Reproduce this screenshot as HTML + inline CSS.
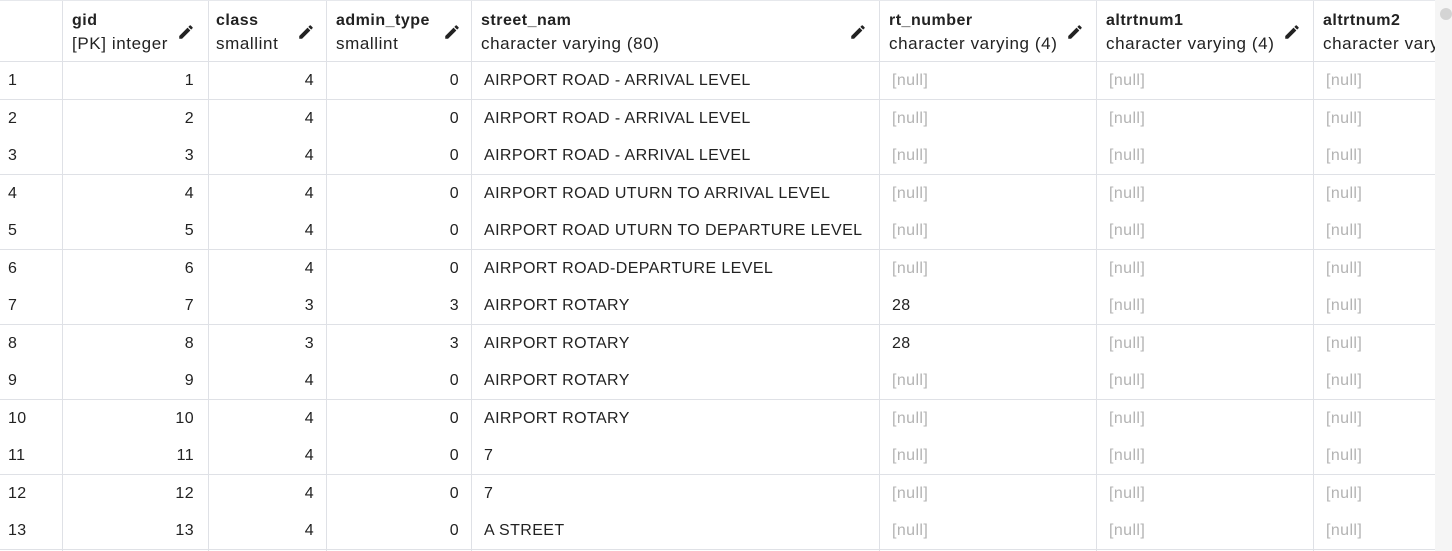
<!DOCTYPE html>
<html><head><style>
body{margin:0;width:1452px;height:551px;overflow:hidden;background:#fff;font-family:"Liberation Sans",sans-serif;color:#222;position:relative}
.v{position:absolute;top:1px;bottom:0;width:1px;background:#dfe1e6}
.h{position:absolute;left:0;width:1435px;height:1px;background:#dfe1e6}
.t{position:absolute;font-size:16px;white-space:nowrap;line-height:20px;letter-spacing:0.4px}
.b{font-weight:bold;color:#222;letter-spacing:0.5px}
.ty{font-size:17px;letter-spacing:0.6px}
.n{color:#b3b3b3}
.r{text-align:right}
svg{position:absolute}
</style></head><body>
<div class="h" style="top:0;background:#e6e8ec"></div>
<div class="h" style="top:61px"></div>
<div class="v" style="left:62px"></div><div class="v" style="left:208px"></div><div class="v" style="left:326px"></div><div class="v" style="left:471px"></div><div class="v" style="left:879px"></div><div class="v" style="left:1096px"></div><div class="v" style="left:1313px"></div>
<div id="c"></div>
<script>
var cols=[[72,"gid","[PK] integer",186],[216,"class","smallint",306],[336,"admin_type","smallint",452],[481,"street_nam","character varying (80)",858],[889,"rt_number","character varying (4)",1075],[1106,"altrtnum1","character varying (4)",1292],[1323,"altrtnum2","character varying",null]];
var h="";
cols.forEach(function(c){h+='<div class="t b" style="left:'+c[0]+'px;top:11px">'+c[1]+'</div><div class="t ty" style="left:'+c[0]+'px;top:34px">'+c[2]+'</div>';
if(c[3])h+='<svg style="left:'+(c[3]-9)+'px;top:23px" width="18" height="18" viewBox="0 0 24 24"><path fill="#222" d="M3 17.25V21h3.75L17.81 9.94l-3.75-3.75L3 17.25zM20.71 7.04a1 1 0 0 0 0-1.41l-2.34-2.34a1 1 0 0 0-1.41 0l-1.83 1.83 3.75 3.75 1.83-1.83z"/></svg>';});
var st=["AIRPORT ROAD - ARRIVAL LEVEL","AIRPORT ROAD - ARRIVAL LEVEL","AIRPORT ROAD - ARRIVAL LEVEL","AIRPORT ROAD UTURN TO ARRIVAL LEVEL","AIRPORT ROAD UTURN TO DEPARTURE LEVEL","AIRPORT ROAD-DEPARTURE LEVEL","AIRPORT ROTARY","AIRPORT ROTARY","AIRPORT ROTARY","AIRPORT ROTARY","7","7","A STREET"];
var cl=[4,4,4,4,4,4,3,3,4,4,4,4,4],ad=[0,0,0,0,0,0,3,3,0,0,0,0,0];
for(var i=0;i<13;i++){var y=62+i*37.5,ty=y+9;
if(i%2==0)h+='<div class="h" style="top:'+(y+37)+'px"></div>';
h+='<div class="t" style="left:8px;top:'+ty+'px">'+(i+1)+'</div>';
h+='<div class="t r" style="left:62px;width:132px;top:'+ty+'px">'+(i+1)+'</div>';
h+='<div class="t r" style="left:208px;width:106px;top:'+ty+'px">'+cl[i]+'</div>';
h+='<div class="t r" style="left:326px;width:133px;top:'+ty+'px">'+ad[i]+'</div>';
h+='<div class="t" style="left:484px;top:'+ty+'px">'+st[i]+'</div>';
h+=(i==6||i==7)?'<div class="t" style="left:892px;top:'+ty+'px">28</div>':'<div class="t n" style="left:892px;top:'+ty+'px">[null]</div>';
h+='<div class="t n" style="left:1109px;top:'+ty+'px">[null]</div><div class="t n" style="left:1326px;top:'+ty+'px">[null]</div>';}
document.getElementById("c").innerHTML=h;
</script>
<div style="position:absolute;left:1435px;top:0;width:17px;height:551px;background:#f5f5f5"></div>
<div style="position:absolute;left:1440px;top:8px;width:12px;height:12px;border-radius:6px;background:#d4d4d4"></div>
</body></html>
